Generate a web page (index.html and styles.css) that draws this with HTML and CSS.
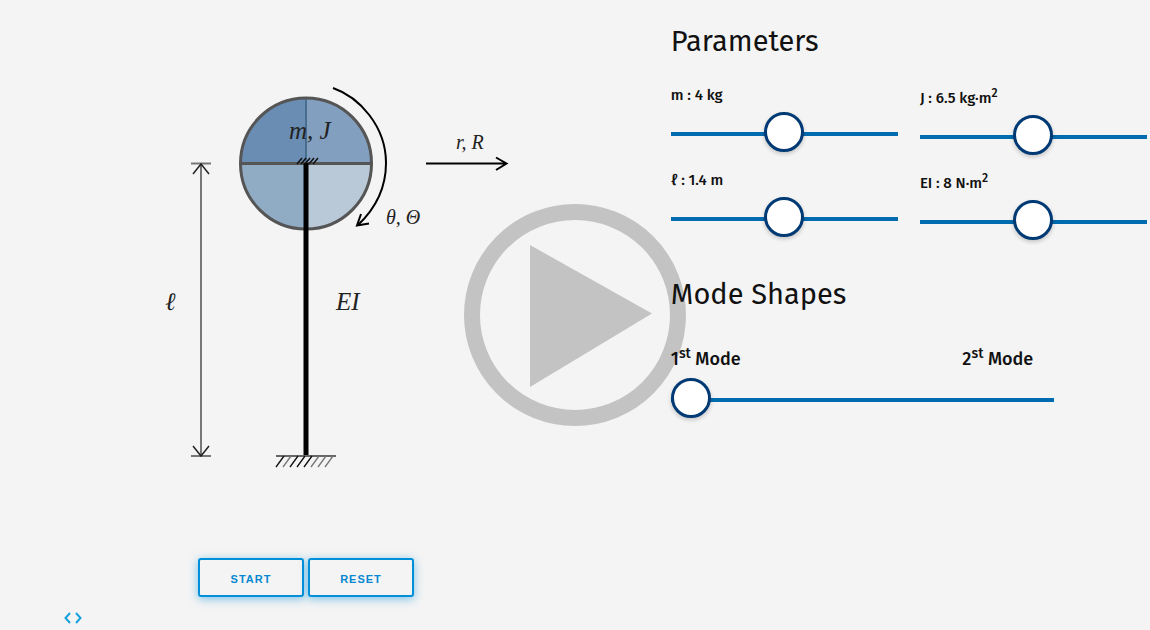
FILE: index.html
```html
<!DOCTYPE html>
<html lang="en">
<head>
<meta charset="utf-8">
<meta name="viewport" content="width=device-width, initial-scale=1">
<title>Mode Shapes</title>
<link rel="stylesheet" href="styles.css">
</head>
<body>
<main class="layout">
  <section class="stage">
    <svg class="diagram" viewBox="0 0 575 480" role="img" aria-label="Cantilever beam with a disk at its tip">
      <path d="M306 163.500V98A65.500 65.500 0 0 0 240.500 163.500z" fill="#698db3"/>
      <path d="M306 163.500V98A65.500 65.500 0 0 1 371.500 163.500z" fill="#829fbf"/>
      <path d="M306 163.500V229A65.500 65.500 0 0 1 240.500 163.500z" fill="#90abc4"/>
      <path d="M306 163.500V229A65.500 65.500 0 0 0 371.500 163.500z" fill="#b9c9d8"/>
      <path d="M306 98v66" stroke="#496d8e" stroke-width="2"/>
      <circle cx="306" cy="163.500" r="65.500" class="disk-line"/>
      <path d="M240 163.500h132" class="disk-line"/>
      <path d="M306 163v293" stroke="#000" stroke-width="5"/>
      <path d="M297 164l5-6m-1 6l5-6m-1 6l5-6m-1 6l5-6m-1 6l5-6" class="tip-hatch"/>
      <path d="M333 88C359 97 386 126 386 163C386 187 376 208 358 225" class="arrow"/>
      <path d="M361 214l-4 11.500 12-2" class="arrow"/>
      <path d="M426 163.500h80M496 157.500l10.500 6-10.500 6.500" class="arrow"/>
      <path d="M201 164v292M191 163.500h20M191 456h20" stroke="#777" stroke-width="2" fill="none"/>
      <path d="M193 174l8-10 8 10M193 446l8 10 8-10" stroke="#222" stroke-width="1.500" fill="none"/>
      <path d="M276 456h60" stroke="#666" stroke-width="2"/>
      <path d="M276 467l8-11m6 11l8-11m-1 11l8-11m-1 11l8-11" stroke="#111" stroke-width="1.300"/>
      <path d="M283 467l8-11m20 11l8-11m-1 11l8-11m-1 11l8-11" stroke="#777" stroke-width="1.300"/>
      <text x="289" y="139" class="math math-large">m, J</text>
      <text x="456" y="149" class="math math-small">r, R</text>
      <text x="386" y="224" class="math math-small">θ, Θ</text>
      <text x="336" y="310" class="math math-large">EI</text>
      <text x="165" y="310" class="math math-large">ℓ</text>
    </svg>
    <div class="actions">
      <button type="button" class="action">START</button>
      <button type="button" class="action">RESET</button>
    </div>
    <button type="button" class="pager" aria-label="Previous or next">
      <svg width="18" height="12" viewBox="0 0 18 12"><path d="M6 1L1.500 6 6 11M12 1l4.500 5L12 11"/></svg>
    </button>
  </section>

  <section class="panel">
    <h2 class="title">Parameters</h2>
    <div class="params">
      <div class="param">
        <label for="mass">m : 4 kg</label>
        <input id="mass" class="slider" type="range" min="0" max="100" value="50">
      </div>
      <div class="param">
        <label for="inertia">J : 6.5 kg·m<sup>2</sup></label>
        <input id="inertia" class="slider" type="range" min="0" max="100" value="50">
      </div>
      <div class="param">
        <label for="length">ℓ : 1.4 m</label>
        <input id="length" class="slider" type="range" min="0" max="100" value="50">
      </div>
      <div class="param">
        <label for="stiffness">EI : 8 N·m<sup>2</sup></label>
        <input id="stiffness" class="slider" type="range" min="0" max="100" value="50">
      </div>
    </div>
    <h2 class="title">Mode Shapes</h2>
    <div class="modes">
      <div class="mode-labels">
        <label for="mode">1<sup>st</sup> Mode</label>
        <label for="mode">2<sup>st</sup> Mode</label>
      </div>
      <input id="mode" class="slider" type="range" min="0" max="100" value="0">
    </div>
  </section>
</main>
<button type="button" class="play" aria-label="Play">
  <svg viewBox="0 0 222 222"><circle cx="111" cy="111" r="103"/><path d="M66 41l122 68.500L66 183z"/></svg>
</button>
</body>
</html>
```
FILE: styles.css
```css
* { box-sizing: border-box; }

body {
  margin: 0;
  min-height: 100vh;
  overflow: hidden;
  background: #f4f4f4;
  color: #111;
  font-family: "Fira Sans", "Noto Sans", sans-serif;
}

.layout {
  display: grid;
  grid-template-columns: 7fr 5fr;
}

.layout > * { min-width: 0; }

.stage { padding-right: 96px; }

.diagram {
  display: block;
  width: 100%;
  min-width: 575px;
}

.disk-line { fill: none; stroke: #555; stroke-width: 3; }
.tip-hatch { fill: none; stroke: #111; stroke-width: 1.5; }
.arrow { fill: none; stroke: #000; stroke-width: 2; }
.math { font-family: "Liberation Serif", serif; font-style: italic; fill: #222; }
.math-large { font-size: 25px; }
.math-small { font-size: 20px; }

.actions {
  display: flex;
  gap: 4px;
  padding: 78px 0 0 198px;
}

.action {
  width: 106px;
  height: 39px;
  padding: 2px 0 0;
  border: 2px solid #0090d9;
  border-radius: 3px;
  background: #f4f4f4;
  box-shadow: 0 2px 10px rgba(0, 144, 217, 0.5);
  color: #0788d1;
  font: bold 11px "Liberation Sans", sans-serif;
  letter-spacing: 1px;
}

.pager {
  display: block;
  margin: 15px 0 0 64px;
  padding: 0;
  border: 0;
  background: none;
  line-height: 0;
}

.pager path { fill: none; stroke: #16a0dc; stroke-width: 2; }

.panel {
  position: relative;
  z-index: 1;
  padding-top: 22px;
}

.title {
  margin: 0;
  font-size: 29px;
  font-weight: 400;
  line-height: 40px;
}

.params {
  display: grid;
  grid-template-columns: 1fr 1fr;
  gap: 13px 22px;
  margin: 23px 3px 33px 0;
  font-size: 15px;
  font-weight: 500;
  line-height: 20px;
}

.param label { display: block; }

.param sup { font-size: 12px; line-height: 16px; }

.slider {
  display: block;
  width: 100%;
  height: 40px;
  margin: 9px 0 0;
  background: none;
  appearance: none;
}

.slider::-webkit-slider-runnable-track {
  height: 4px;
  background: #006bae;
}

.slider::-webkit-slider-thumb {
  appearance: none;
  width: 40px;
  height: 40px;
  margin-top: -20px;
  border: 3px solid #003a75;
  border-radius: 50%;
  background: #fff;
  box-shadow: 0 2px 4px rgba(0, 0, 0, 0.2);
}

.modes {
  width: 80%;
  margin-top: 29px;
  font-size: 18px;
  font-weight: 500;
  line-height: 24px;
}

.mode-labels {
  display: flex;
  justify-content: space-between;
  padding-right: 21px;
}

.mode-labels sup { font-size: 14px; line-height: 20px; }

.play {
  position: absolute;
  top: 50%;
  left: 50%;
  width: 222px;
  height: 222px;
  padding: 0;
  border: 0;
  background: none;
  transform: translate(-50%, -50%);
}

.play svg { display: block; }
.play circle { fill: none; stroke: #c3c3c3; stroke-width: 16; }
.play path { fill: #c3c3c3; }
```
